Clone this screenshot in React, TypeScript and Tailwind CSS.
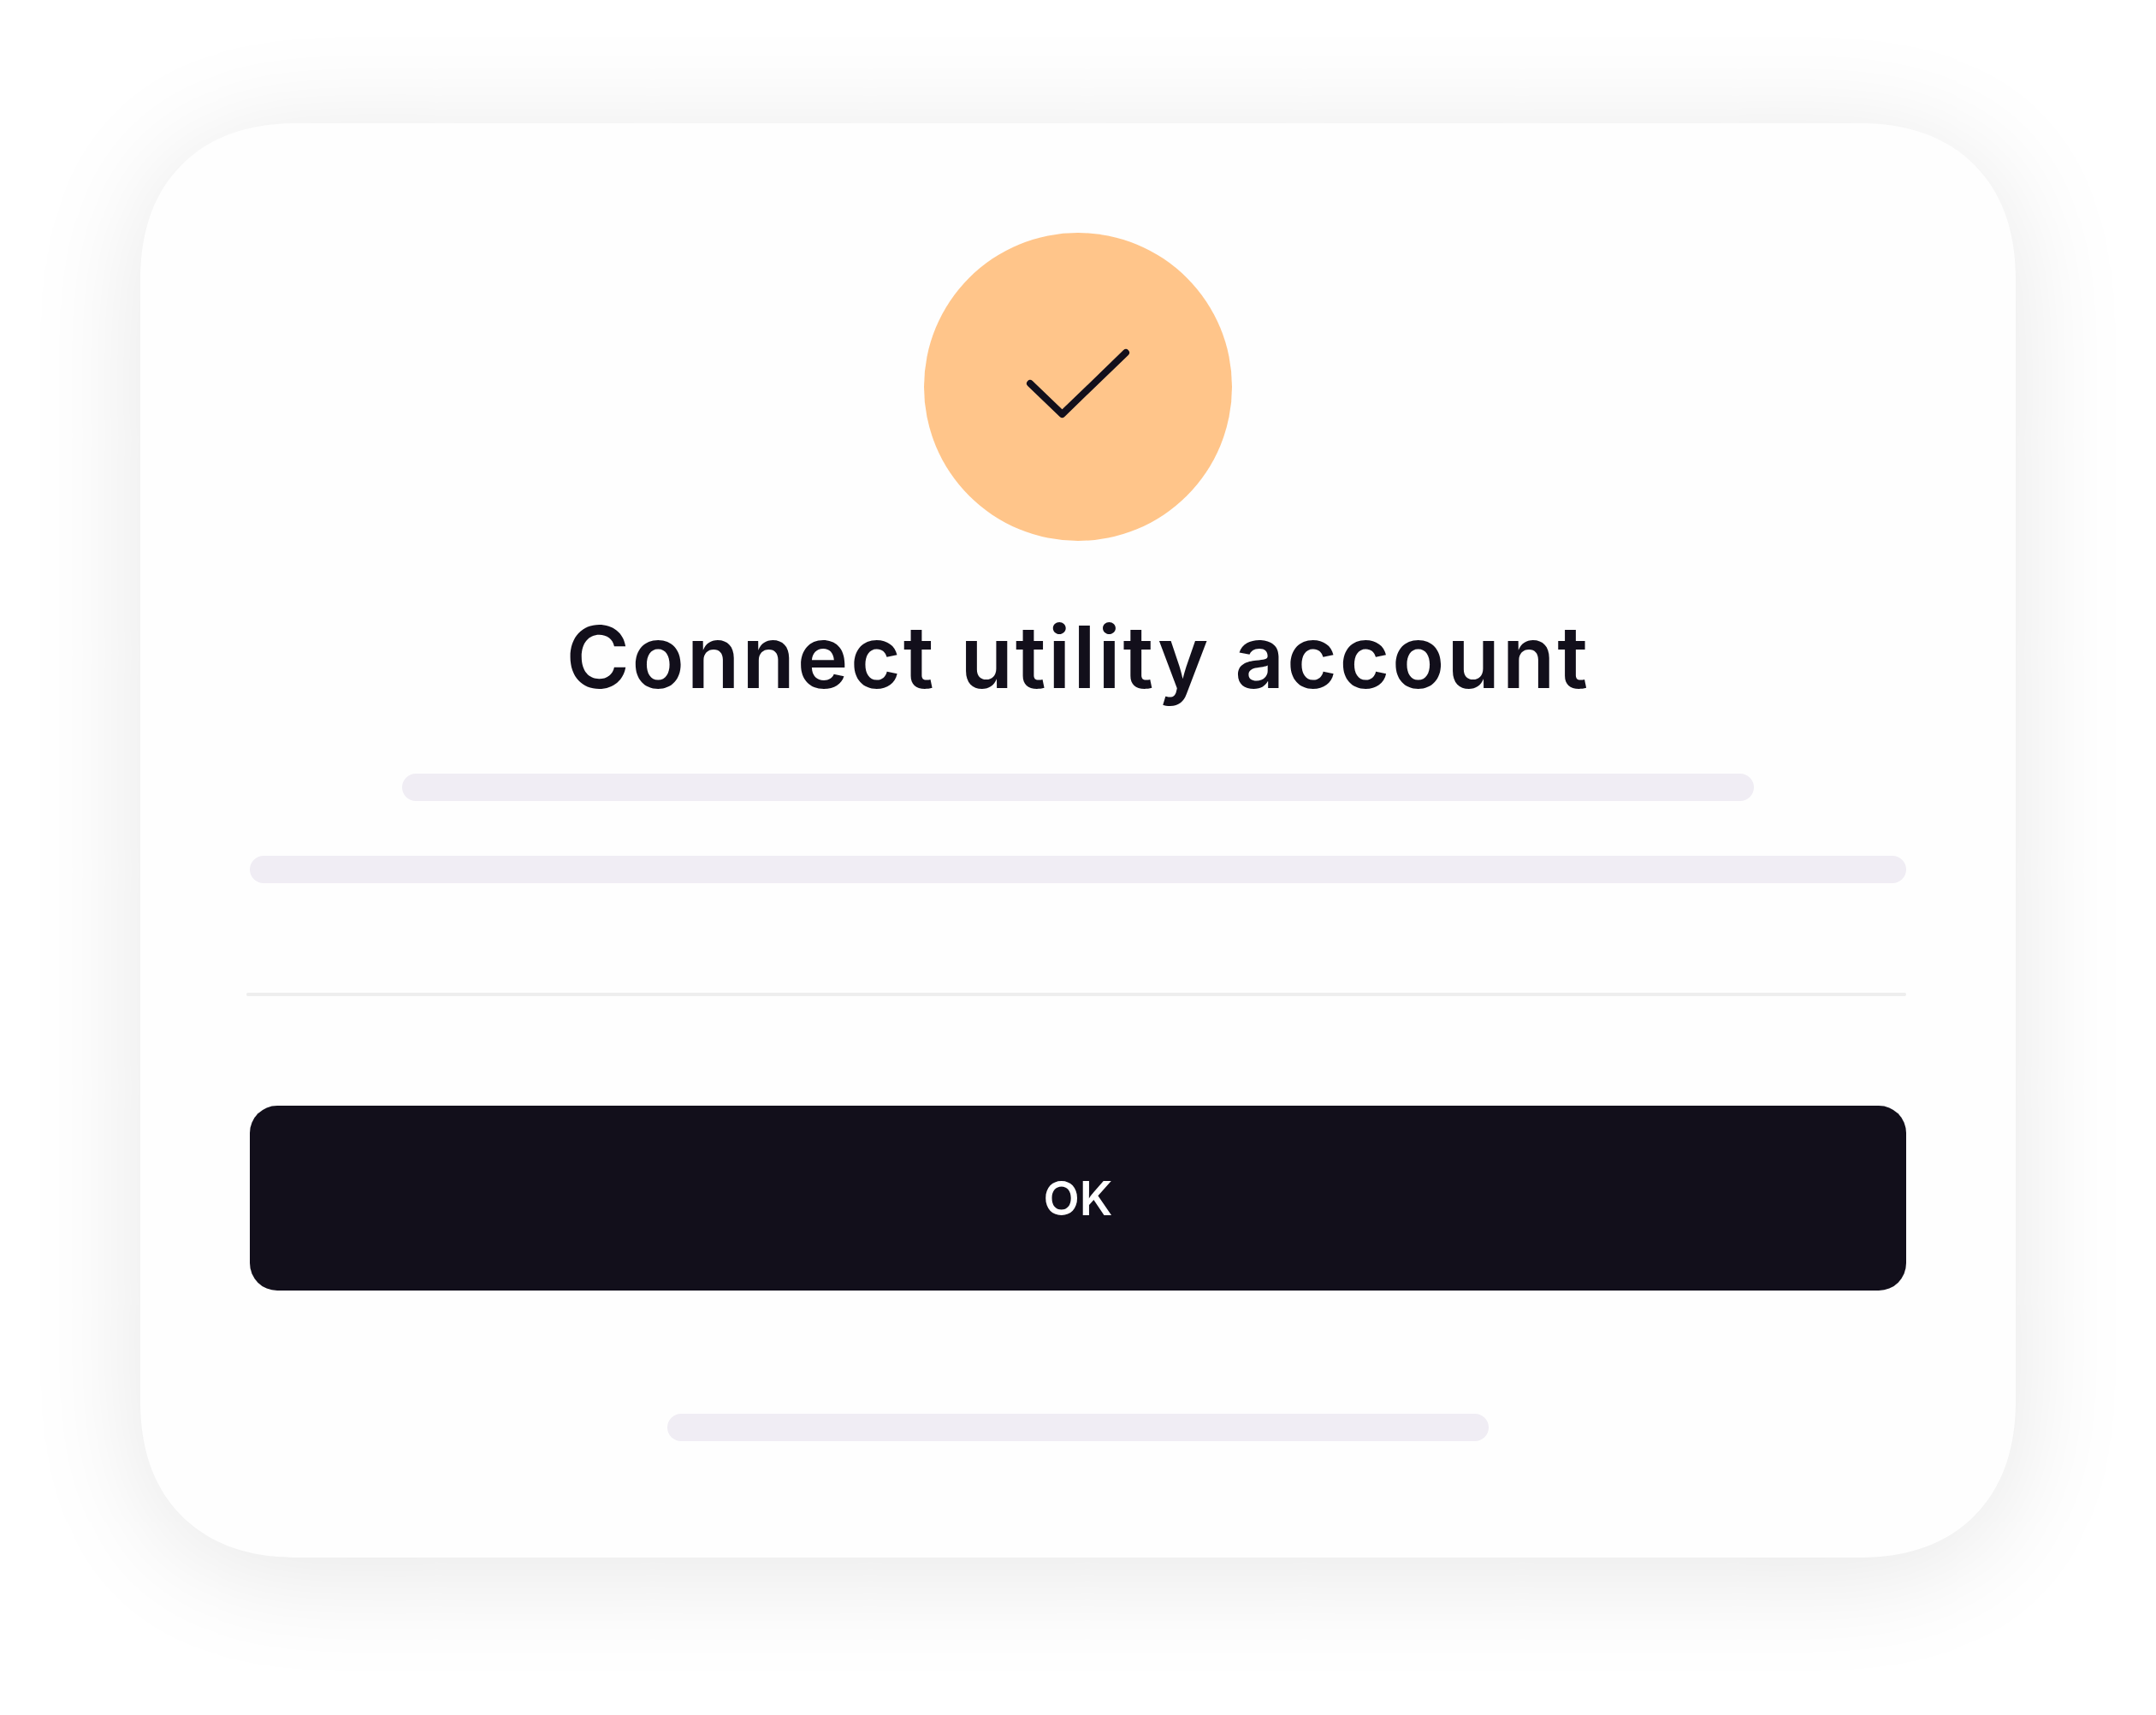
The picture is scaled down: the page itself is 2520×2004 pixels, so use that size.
import { memo } from 'react';

interface SkeletonBarProps {
    className: string;
}

// Placeholder line of text
const SkeletonBar = memo(function SkeletonBar({ className }: SkeletonBarProps) {
    return <div className={`h-8 rounded-full bg-[#f0edf4] ${className}`} />;
});

function CheckBadge() {
    return (
        <div className="flex size-[360px] items-center justify-center rounded-full bg-[#ffc58a]">
            <svg
                className="size-48"
                viewBox="0 0 192 192"
                fill="none"
                stroke="#120f1b"
                strokeWidth="8"
                strokeLinecap="round"
                strokeLinejoin="round"
            >
                <path d="M40 92 L77.5 128 L152 56" />
            </svg>
        </div>
    );
}

export default function App() {
    return (
        <div className="flex h-[2004px] w-[2520px] flex-col items-center bg-white pt-36 font-['Inter',sans-serif]">
            <main className="flex h-[1676px] w-[2192px] flex-col items-center rounded-[184px] bg-[#fefefe] px-32 pt-32 shadow-[0_16px_136px_rgba(0,0,0,0.1)] [corner-shape:superellipse(1.18)]">
                <CheckBadge />

                {/* Title */}
                <h1 className="mt-16 h-36 text-[101px] leading-[142px] font-semibold tracking-[2.7px] whitespace-nowrap text-[#120f1b]">
                    Connect utility account
                </h1>

                {/* Description */}
                <SkeletonBar className="mt-16 w-[1580px]" />
                <SkeletonBar className="mt-16 w-full" />

                <hr className="mt-32 h-1 w-[1940px] -translate-x-0.5 rounded-full border-0 bg-[#eeeeee]" />

                <button
                    type="button"
                    className="mt-32 flex h-54 w-full items-center justify-center rounded-4xl bg-[#120f1b] text-[55px] font-semibold text-white"
                >
                    OK
                </button>

                {/* Footer link */}
                <SkeletonBar className="mt-36 w-[960px]" />
            </main>
        </div>
    );
}
